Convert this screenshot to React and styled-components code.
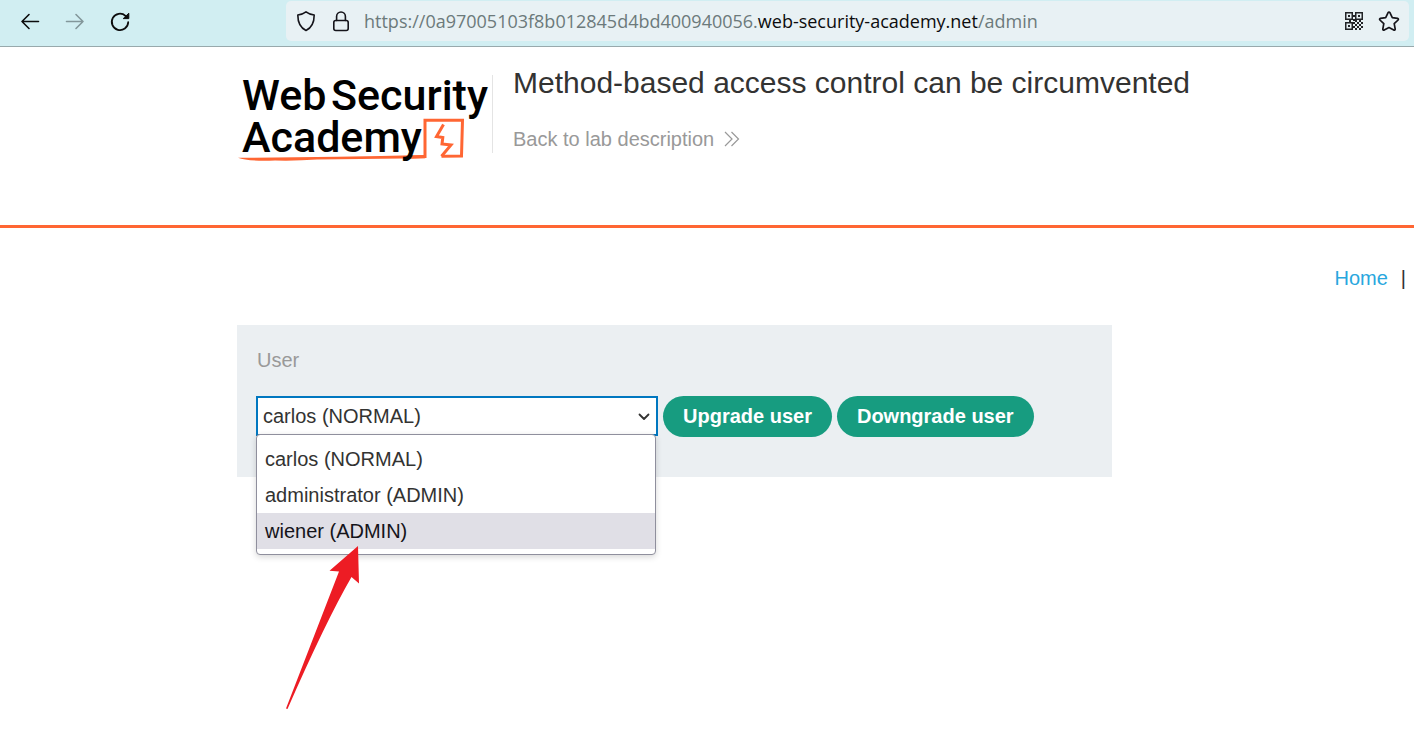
import React, { useState } from "react";
import styled, { createGlobalStyle } from "styled-components";

const GlobalStyle = createGlobalStyle`
  *, *::before, *::after { box-sizing: border-box; }
  body {
    margin: 0;
    background: #fff;
    color: #333332;
    font-family: "Liberation Sans", Arial, sans-serif;
    font-size: 20px;
    line-height: 24px;
  }
`;

const Page = styled.div`
  min-height: 100vh;
`;

const BrowserBar = styled.div`
  display: flex;
  align-items: flex-start;
  height: 47px;
  padding: 1px 5px 0 18px;
  background: #d1eef2;
  border-bottom: 1px solid #98a9ac;
`;

const NavButtons = styled.div`
  display: flex;
  align-items: center;
  gap: 21px;
  flex: 0 0 268px;
  height: 40px;
`;

const IconButton = styled.button`
  display: flex;
  align-items: center;
  justify-content: center;
  flex: none;
  width: 24px;
  height: 24px;
  padding: 0;
  border: 0;
  background: none;
  color: ${(p) => (p.$muted ? "#83979b" : "#0c0c0d")};
`;

const AddressBar = styled.div`
  display: flex;
  align-items: center;
  gap: 11px;
  flex: 1;
  min-width: 0;
  height: 40px;
  padding: 0 8px;
  border-radius: 5px;
  background: #e8f1f4;
`;

const Address = styled.div`
  flex: 1;
  min-width: 0;
  overflow: hidden;
  white-space: nowrap;
  font-family: "Open Sans", "Noto Sans", sans-serif;
  font-size: 18px;
  line-height: 28px;
  color: #6c7a7b;
`;

const Domain = styled.span`
  color: #0c0c0d;
`;

const Header = styled.header`
  display: flex;
  align-items: flex-start;
  gap: 20px;
  height: 181px;
  padding: 16px 20px 0 237px;
  border-bottom: 3px solid #ff6633;
`;

const LogoLink = styled.a`
  display: block;
  flex: none;
  margin-top: 12px;
  height: 78px;
  width: 256px;
  border-right: 1px solid #e4e4e4;
`;

const LogoDrawing = styled.svg`
  display: block;
  overflow: visible;
  font-family: Roboto, sans-serif;
  font-size: 43px;
  font-weight: 500;
`;

const Title = styled.h1`
  margin: 0 0 24px;
  font-size: 30px;
  line-height: 40px;
  font-weight: 400;
`;

const BackLink = styled.a`
  display: flex;
  align-items: center;
  gap: 10px;
  color: #999;
  text-decoration: none;
`;

const TopNav = styled.nav`
  display: flex;
  justify-content: flex-end;
  gap: 13px;
  padding: 38px 8px 35px;
`;

const HomeLink = styled.a`
  color: #29a7de;
  text-decoration: none;
`;

const Form = styled.form`
  margin: 0 302px 0 237px;
  padding: 23px 19px 40px;
  background: #ebeff2;
`;

const Label = styled.label`
  display: block;
  margin-bottom: 24px;
  padding-left: 1px;
  color: #999;
`;

const Controls = styled.div`
  display: flex;
  align-items: flex-start;
  gap: 5px;
`;

const SelectWrap = styled.div`
  position: relative;
  width: 402px;
`;

const Select = styled.select`
  display: block;
  appearance: none;
  width: 100%;
  height: 40px;
  padding: 0 28px 0 5px;
  border: 2px solid #0077c0;
  border-radius: 0;
  outline: 0;
  background: #fff;
  color: #333332;
  font: inherit;
`;

const Chevron = styled.svg`
  position: absolute;
  right: 7px;
  top: 16px;
  pointer-events: none;
`;

const Menu = styled.ul`
  position: absolute;
  z-index: 1;
  top: 38px;
  left: 0;
  right: 2px;
  margin: 0;
  padding: 6px 0 5px;
  list-style: none;
  background: #fff;
  border: 1px solid #8f8f9d;
  border-radius: 4px;
  box-shadow: 0 2px 6px rgba(0, 0, 0, 0.16);
`;

const MenuItem = styled.li`
  padding: 0 8px;
  line-height: 36px;
  color: ${(p) => (p.$active ? "#15141a" : "#333332")};
  background: ${(p) => (p.$active ? "#e0dfe6" : "transparent")};
`;

const Pointer = styled.svg`
  position: absolute;
  z-index: 2;
  top: 150px;
  left: 28px;
  pointer-events: none;
`;

const PillButton = styled.button`
  height: 41px;
  padding: 0 20px 2px;
  border: 0;
  border-radius: 21px;
  background: #179c80;
  color: #fff;
  font: inherit;
  font-weight: 700;
  white-space: nowrap;
`;

const stroke = {
  fill: "none",
  stroke: "currentColor",
  strokeLinecap: "round",
  strokeLinejoin: "round",
};

const ArrowIcon = ({ flip }) => (
  <svg width="24" height="24" viewBox="0 0 24 24" {...stroke} strokeWidth="1.6">
    <path d={flip ? "M3.5 12.5H20M13 5.5l7 7-7 7" : "M20.5 12.5H4M11 5.5l-7 7 7 7"} />
  </svg>
);

const ReloadIcon = () => (
  <svg width="24" height="24" viewBox="0 0 24 24" {...stroke} strokeWidth="1.8">
    <path d="M20.2 13.2A8.2 8.2 0 1 1 17.5 6.8" />
    <path d="M20.8 4.6v5h-5.2z" fill="currentColor" strokeWidth="1" />
  </svg>
);

const ShieldIcon = () => (
  <svg width="24" height="24" viewBox="0 0 24 24" {...stroke} stroke="#15141a" strokeWidth="1.6">
    <path d="M12 2.8c2.4 1.8 5 2.800 8.200 3.200 0 7-2 12.500-8.200 15.500C5.800 18.500 3.800 13 3.800 6c3.200-.4 5.800-1.400 8.200-3.200z" />
  </svg>
);

const LockIcon = () => (
  <svg width="24" height="24" viewBox="0 0 24 24" {...stroke} stroke="#15141a" strokeWidth="1.6">
    <rect x="4.8" y="11.5" width="14.4" height="10" rx="2" />
    <path d="M7.6 11.5V7.4a4.4 4.4 0 0 1 8.800 0v4.100" />
  </svg>
);

const QrIcon = () => (
  <svg width="18" height="18" viewBox="0 0 18 18" fill="#222427">
    <path
      fillRule="evenodd"
      d="M0 0h8v8H0zM1.5 1.5v5h5v-5zM10 0h8v8h-8zM11.5 1.5v5h5v-5zM0 10h8v8H0zM1.5 11.5v5h5v-5z"
    />
    <path d="M3 3h2v2H3zM13 3h2v2h-2zM3 13h2v2H3zM8 3h2v2H8zM8 7h2v2H8zM4 8h2v2H4zM8 10h2v2H8zM10 8h2v2h-2zM14 8h2v2h-2zM12 10h2v2h-2zM16 10h2v2h-2zM10 12h2v2h-2zM14 12h2v2h-2zM8 14h2v2H8zM12 14h2v2h-2zM16 14h2v2h-2zM10 16h2v2h-2zM14 16h2v2h-2z" />
  </svg>
);

const StarIcon = () => (
  <svg width="24" height="24" viewBox="0 0 24 24" {...stroke} stroke="#15141a" strokeWidth="1.7">
    <path d="M11.1 3.6a1 1 0 0 1 1.8 0l2.400 5 5.300.7a1 1 0 0 1 .5 1.700l-3.900 3.700 1 5.400a1 1 0 0 1-1.400 1L12 18.500l-4.800 2.600a1 1 0 0 1-1.400-1l1-5.400L2.900 11a1 1 0 0 1 .5-1.700l5.300-.7z" />
  </svg>
);

const Logo = () => (
  <LogoDrawing width="255" height="88" viewBox="0 0 255 88" aria-label="Web Security Academy">
    <g fill="none" stroke="#ff6633" strokeWidth="3">
      <path d="M172 82.200L188 81.500V45.200H225.500L224.500 81L204.500 81.300" />
      <path d="M206.500 49.500L199.500 61.500L205.800 62.500L205 69L214 70L204.500 81.300" />
    </g>
    <path d="M1 82.700Q90 82.500 188 80V83.200L80 84.500Q60 86 38 85.500Q10 86.500 1 82.700z" fill="#ff6633" />
    <text x="5" y="35">Web</text>
    <text x="94" y="35">Security</text>
    <text x="5" y="77">Academy</text>
  </LogoDrawing>
);

const USERS = [
  { id: "carlos", label: "carlos (NORMAL)" },
  { id: "administrator", label: "administrator (ADMIN)" },
  { id: "wiener", label: "wiener (ADMIN)" },
];

export default function App() {
  const [user, setUser] = useState("carlos");
  return (
    <Page>
      <GlobalStyle />
      <BrowserBar>
        <NavButtons>
          <IconButton aria-label="Back"><ArrowIcon /></IconButton>
          <IconButton aria-label="Forward" $muted><ArrowIcon flip /></IconButton>
          <IconButton aria-label="Reload"><ReloadIcon /></IconButton>
        </NavButtons>
        <AddressBar>
          <IconButton aria-label="Tracking protection"><ShieldIcon /></IconButton>
          <IconButton aria-label="Connection security"><LockIcon /></IconButton>
          <Address>
            https://0a97005103f8b012845d4bd400940056.<Domain>web-security-academy.net</Domain>/admin
          </Address>
          <IconButton aria-label="QR code"><QrIcon /></IconButton>
          <IconButton aria-label="Bookmark"><StarIcon /></IconButton>
        </AddressBar>
      </BrowserBar>
      <Header>
        <LogoLink href="#"><Logo /></LogoLink>
        <div>
          <Title>Method-based access control can be circumvented</Title>
          <BackLink href="#">
            Back to lab description
            <svg width="16" height="16" viewBox="0 0 16 16" fill="none" stroke="#999" strokeWidth="1.2">
              <path d="M1 1l7 7-7 7M7.500 1l7 7-7 7" />
            </svg>
          </BackLink>
        </div>
      </Header>
      <main>
        <TopNav>
          <HomeLink href="#">Home</HomeLink>
          <span>|</span>
        </TopNav>
        <Form onSubmit={(e) => e.preventDefault()}>
          <Label htmlFor="username">User</Label>
          <Controls>
            <SelectWrap>
              <Select id="username" value={user} onChange={(e) => setUser(e.target.value)}>
                {USERS.map((u) => (
                  <option key={u.id} value={u.id}>{u.label}</option>
                ))}
              </Select>
              <Chevron width="14" height="10" viewBox="0 0 14 10" {...stroke} strokeWidth="1.8">
                <path d="M2.500 2.500L7 7l4.500-4.500" />
              </Chevron>
              <Menu role="listbox" aria-label="User">
                {USERS.map((u) => (
                  <MenuItem
                    key={u.id}
                    role="option"
                    aria-selected={u.id === user}
                    $active={u.id === "wiener"}
                    onClick={() => setUser(u.id)}
                  >
                    {u.label}
                  </MenuItem>
                ))}
              </Menu>
              <Pointer width="78" height="166" viewBox="0 0 78 166" fill="#ed1c24" aria-hidden="true">
                <path d="M74 0L75 37.500 67.500 31Q42 75 3.500 163L2 162.500Q32 85 55 25.500L45.500 24.700z" />
              </Pointer>
            </SelectWrap>
            <PillButton type="submit">Upgrade user</PillButton>
            <PillButton type="submit">Downgrade user</PillButton>
          </Controls>
        </Form>
      </main>
    </Page>
  );
}
